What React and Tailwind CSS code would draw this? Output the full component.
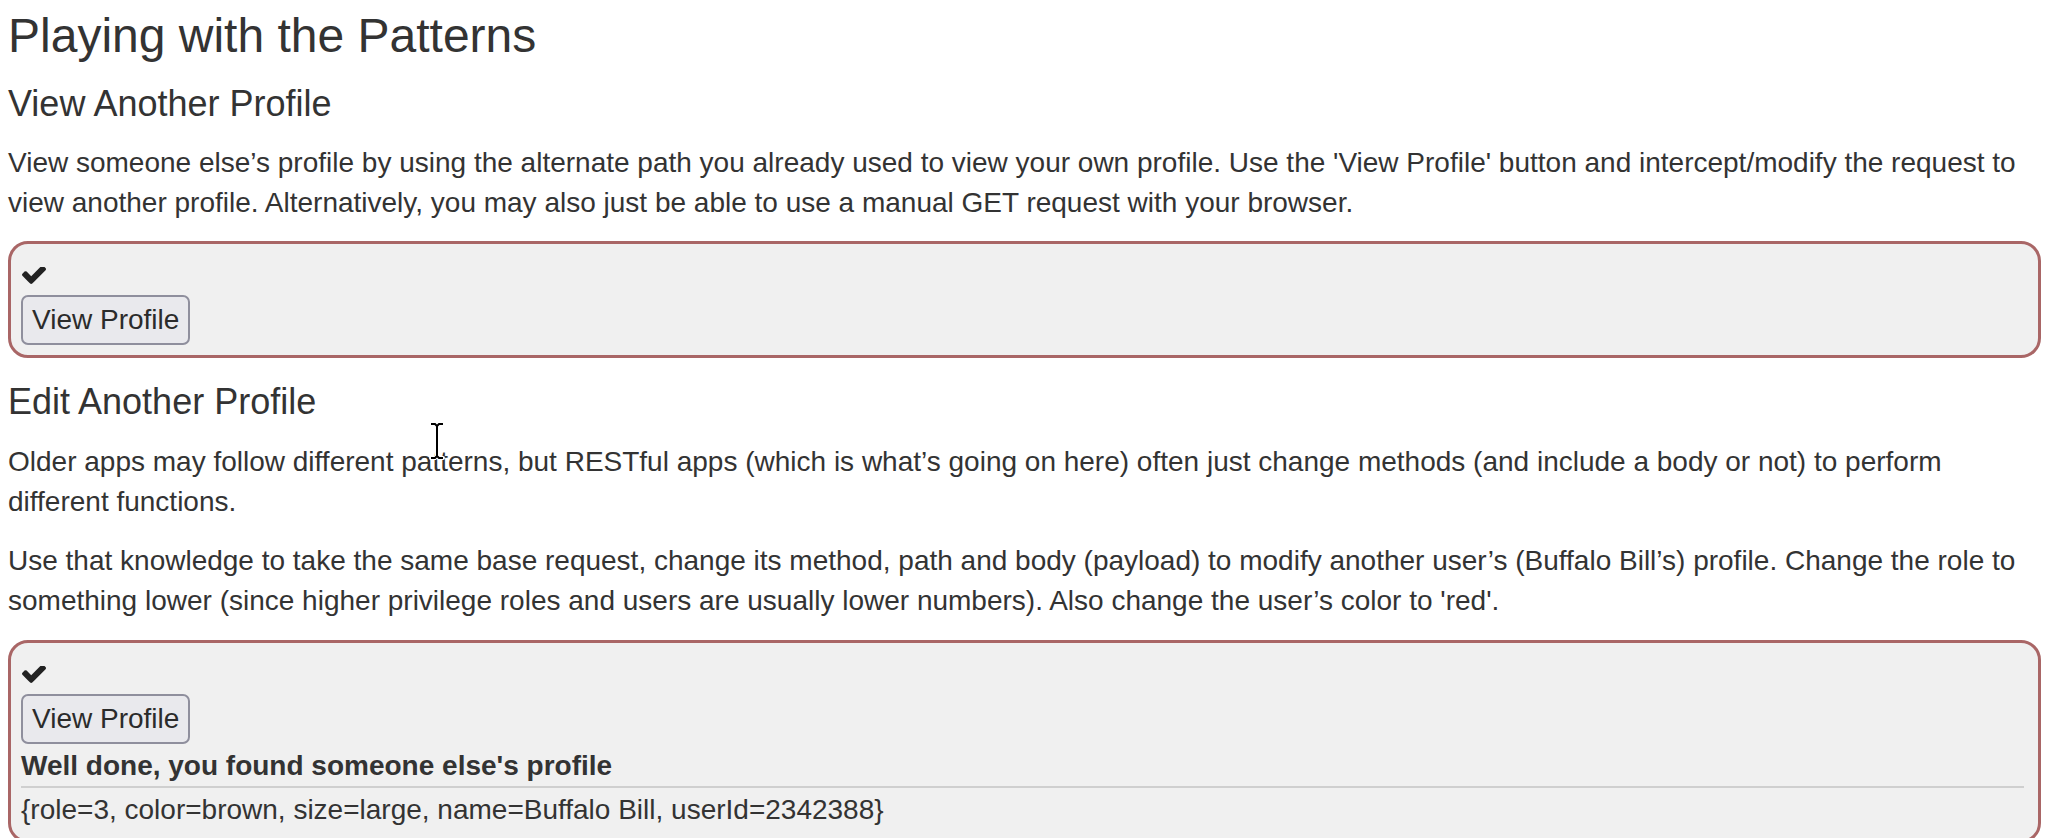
import React from "react";

function Check() {
  return (
    <svg width="24" height="17" viewBox="121 430 1550 1092" className="block">
      <path
        fill="#222"
        d="M1671 566q0 40-28 68l-724 724-136 136q-28 28-68 28t-68-28l-136-136-362-362q-28-28-28-68t28-68l136-136q28-28 68-28t68 28l294 295 656-657q28-28 68-28t68 28l136 136q28 28 28 68z"
      />
    </svg>
  );
}

function ViewButton() {
  return (
    <button className="block border-2 border-[#8f8f9d] bg-[#e9e9ed] rounded-[7px] px-[9px] py-[7px] text-[28px] leading-[32px] text-[#2b2b2b]">
      View Profile
    </button>
  );
}

function Box({ children }) {
  return (
    <div className="border-[3px] border-[#a96666] rounded-[20px] bg-[#f0f0f0] pl-[10px] pr-[14px] pt-[11px] pb-[10px]">
      <div className="h-[40px] flex items-center pl-[1px]">
        <Check />
      </div>
      <ViewButton />
      {children}
    </div>
  );
}

export default function App() {
  return (
    <div
      className="relative bg-white min-h-[838px] pl-[8px] pr-[9px] pt-[9px] text-[#333] text-[28px] leading-[40px]"
      style={{ fontFamily: '"Liberation Sans", Arial, sans-serif' }}
    >
      <h3 className="text-[48px] leading-[53px] font-normal">Playing with the Patterns</h3>
      <h4 className="mt-[22px] text-[36px] leading-[40px] font-normal">View Another Profile</h4>
      <p className="mt-[19px]">
        View someone else’s profile by using the alternate path you already used to view your own profile. Use the 'View Profile' button and intercept/modify the request to view another profile. Alternatively, you may also just be able to use a manual GET request with your browser.
      </p>
      <div className="mt-[18px]">
        <Box />
      </div>
      <h4 className="mt-[24px] text-[36px] leading-[40px] font-normal">Edit Another Profile</h4>
      <p className="mt-[20px]">
        Older apps may follow different patterns, but RESTful apps (which is what’s going on here) often just change methods (and include a body or not) to perform different functions.
      </p>
      <p className="mt-[19px]">
        Use that knowledge to take the same base request, change its method, path and body (payload) to modify another user’s (Buffalo Bill’s) profile. Change the role to something lower (since higher privilege roles and users are usually lower numbers). Also change the user’s color to 'red'.
      </p>
      <div className="mt-[19px]">
        <Box>
          <div className="font-bold mt-[2px]">Well done, you found someone else's profile</div>
          <div className="h-[2px] bg-[#cfcfcf] mb-[2px]" />
          <div>{"{role=3, color=brown, size=large, name=Buffalo Bill, userId=2342388}"}</div>
        </Box>
      </div>
      <svg
        className="absolute left-[428px] top-[422px]"
        width="18"
        height="38"
        viewBox="0 0 18 38"
      >
        <path
          d="M3 2h4l2 2 2-2h4M9 4v30M3 36h4l2-2 2 2h4"
          fill="none"
          stroke="#fff"
          strokeWidth="4"
          strokeLinecap="round"
        />
        <path
          d="M3 2h4l2 2 2-2h4M9 4v30M3 36h4l2-2 2 2h4"
          fill="none"
          stroke="#000"
          strokeWidth="2"
        />
      </svg>
    </div>
  );
}
